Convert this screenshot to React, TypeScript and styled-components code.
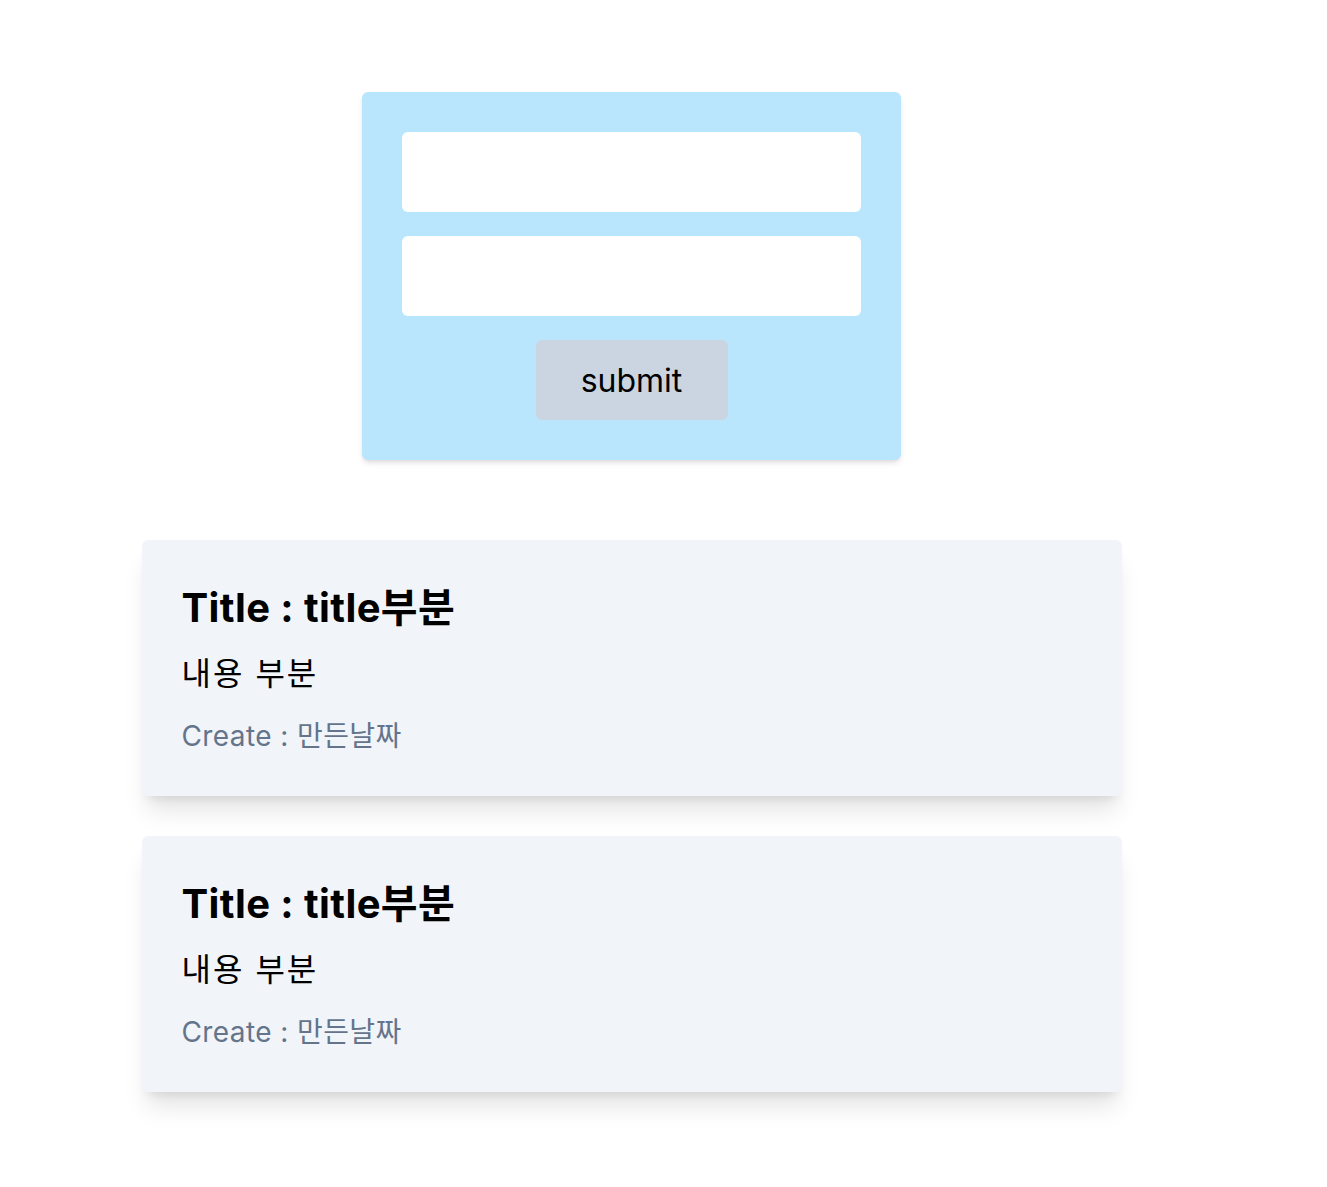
import React from "react";
import styled, { createGlobalStyle } from "styled-components";

const GlobalStyle = createGlobalStyle`
  body {
    margin: 0;
    background: #ffffff;
    font-family: Inter, "Noto Sans CJK KR", sans-serif;
  }
`;

const Page = styled.div`
  width: 1263px;
  padding: 92px 0 80px;
  display: flex;
  flex-direction: column;
  align-items: center;
  gap: 80px;
`;

const Form = styled.form`
  width: 539px;
  box-sizing: border-box;
  padding: 40px;
  background: #bae6fd;
  border-radius: 6px;
  box-shadow: 0 4px 6px -1px rgba(0, 0, 0, 0.1), 0 2px 4px -2px rgba(0, 0, 0, 0.1);
  display: flex;
  flex-direction: column;
  align-items: center;
  gap: 24px;
`;

const Input = styled.input`
  width: 100%;
  height: 80px;
  box-sizing: border-box;
  border: none;
  border-radius: 6px;
  background: #ffffff;
  padding: 0 16px;
  font-family: inherit;
  font-size: 24px;
  outline: none;
`;

const Button = styled.button`
  width: 192px;
  height: 80px;
  padding: 0;
  border: none;
  border-radius: 6px;
  background: #cbd5e1;
  color: #000;
  font-family: inherit;
  font-size: 32px;
  cursor: pointer;
`;

const List = styled.div`
  display: flex;
  flex-direction: column;
  gap: 40px;
`;

const Card = styled.div`
  width: 980px;
  height: 256px;
  box-sizing: border-box;
  padding: 40px;
  background: #f1f5f9;
  border-radius: 6px;
  box-shadow: 0 20px 25px -5px rgba(0, 0, 0, 0.1), 0 8px 10px -6px rgba(0, 0, 0, 0.1);
  display: flex;
  flex-direction: column;
`;

const Title = styled.h2`
  margin: 0;
  font-size: 40px;
  line-height: 56px;
  font-weight: 700;
  color: #000;
  letter-spacing: 0.4px;
`;

const Content = styled.p`
  margin: 18px 0 0;
  font-size: 32px;
  line-height: 40px;
  color: #000;
  letter-spacing: 2px;
`;

const Created = styled.p`
  margin: 22px 0 0;
  font-size: 28px;
  line-height: 40px;
  color: #64748b;
  letter-spacing: 0.4px;
`;

const posts = [
  { id: 1, title: "title부분", body: "내용 부분", date: "만든날짜" },
  { id: 2, title: "title부분", body: "내용 부분", date: "만든날짜" },
];

export default function App() {
  return (
    <>
      <GlobalStyle />
      <Page>
        <Form onSubmit={(e) => e.preventDefault()}>
          <Input type="text" />
          <Input type="text" />
          <Button type="submit">submit</Button>
        </Form>
        <List>
          {posts.map((p) => (
            <Card key={p.id}>
              <Title>Title : {p.title}</Title>
              <Content>{p.body}</Content>
              <Created>Create : {p.date}</Created>
            </Card>
          ))}
        </List>
      </Page>
    </>
  );
}
